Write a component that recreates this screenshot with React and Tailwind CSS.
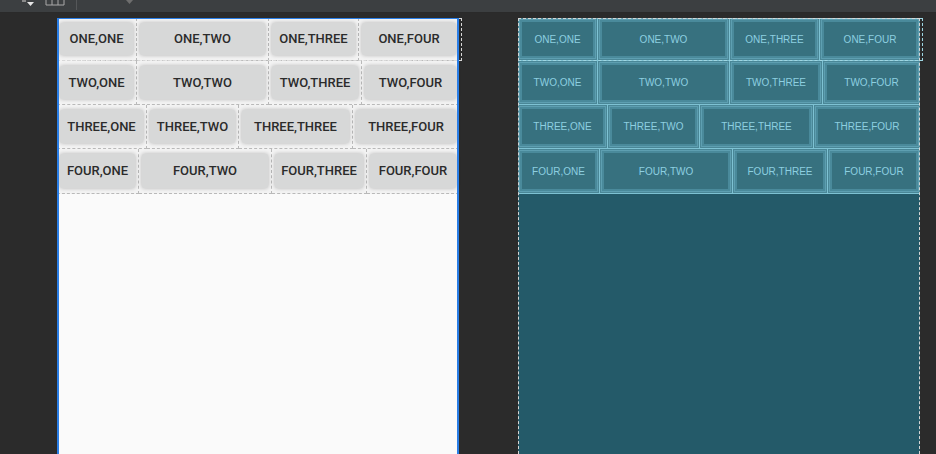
import React from 'react';

const rows = [
  { h: 'h-[43px]', cells: [['ONE,ONE', 'w-[80px]'], ['ONE,TWO', 'w-[132px]'], ['ONE,THREE', 'w-[90px]'], ['ONE,FOUR', 'w-[100px]']] },
  { h: 'h-[44px]', cells: [['TWO,ONE', 'w-[80px]'], ['TWO,TWO', 'w-[132px]'], ['TWO,THREE', 'w-[93px]'], ['TWO,FOUR', 'w-[97px]']] },
  { h: 'h-[44px]', cells: [['THREE,ONE', 'w-[90px]'], ['THREE,TWO', 'w-[92px]'], ['THREE,THREE', 'w-[114px]'], ['THREE,FOUR', 'w-[106px]']] },
  { h: 'h-[45px]', cells: [['FOUR,ONE', 'w-[82px]'], ['FOUR,TWO', 'w-[133px]'], ['FOUR,THREE', 'w-[95px]'], ['FOUR,FOUR', 'w-[92px]']] },
];

// small toolbar strip at the top of the layout editor
const Toolbar = () => (
  <div className="relative h-[13px] shrink-0 bg-[#3c3f41] border-b border-[#2a2a2a]">
    <div className="absolute left-[22px] top-0 h-[2px] w-[4px] bg-[#8a8a8a]" />
    <svg className="absolute left-[27px] top-[2px]" width="7" height="4" viewBox="0 0 7 4">
      <path d="M0 0h7L3.5 4z" fill="#e6e6e6" />
    </svg>
    <svg className="absolute left-[45px] top-0" width="20" height="6" viewBox="0 0 20 6">
      <path d="M1 0v5h18V0M7 0v5M13 0v5" fill="none" stroke="#a9a9a9" strokeWidth="1" />
    </svg>
    <div className="absolute left-[76px] top-0 h-[10px] w-px bg-[#555759]" />
    <svg className="absolute left-[126px] top-0" width="7" height="4" viewBox="0 0 7 4">
      <path d="M0 0h7L3.5 4z" fill="#6e6e6e" />
    </svg>
  </div>
);

const DesignCell = ({ label, w, last }) => (
  <div
    className={`${w} shrink-0 h-full px-[3px] py-[5px] bg-[#f3f3f3] border-b border-dashed border-[#b9b9b9] ${
      last ? '' : 'border-r'
    }`}
  >
    <div className="h-full flex items-center justify-center rounded-[2px] bg-[#d7d8d8] shadow-[0_0_4px_rgba(0,0,0,0.28)] text-[13px] font-medium text-[#2b2b2b] font-['Roboto',sans-serif] whitespace-nowrap">
      {label}
    </div>
  </div>
);

const BlueprintCell = ({ label, w, last }) => (
  <div
    className={`${w} shrink-0 h-full p-[2px] bg-[#4a8797] border-b border-[#7ec2d3] ${last ? '' : 'border-r'}`}
  >
    <div className="h-full flex items-center justify-center border-[2px] border-[#4a8a9b] outline outline-1 outline-[#5e9fb1] bg-[#37717f] text-[10px] text-[#8dcfe0] font-['Liberation_Sans',Arial,sans-serif] whitespace-nowrap">
      {label}
    </div>
  </div>
);

const DesignScreen = () => (
  <div className="relative w-[402px] h-full bg-[#fafafa] flex flex-col">
    {rows.map((row, i) => (
      <div key={i} className={`${row.h} flex shrink-0`}>
        {row.cells.map(([label, w], j) => (
          <DesignCell key={label} label={label} w={w} last={j === 3} />
        ))}
      </div>
    ))}
    <div className="absolute left-0 top-0 h-[43px] -right-[3px] border border-dashed border-[#d8d8d8] pointer-events-none" />
    <div className="absolute inset-0 border-x-2 border-[#2a7ee6] border-t border-t-[#2a7ee6] pointer-events-none" />
  </div>
);

const BlueprintScreen = () => (
  <div className="relative w-[402px] h-full bg-[#245a69] flex flex-col">
    {rows.map((row, i) => (
      <div key={i} className={`${row.h} flex shrink-0`}>
        {row.cells.map(([label, w], j) => (
          <BlueprintCell key={label} label={label} w={w} last={j === 3} />
        ))}
      </div>
    ))}
    <div className="absolute left-0 top-0 h-[43px] -right-[3px] border border-dashed border-[#9fd6e2] pointer-events-none" />
    <div className="absolute inset-0 border border-dashed border-[#d6d6d6] border-b-0 pointer-events-none" />
  </div>
);

export default function App() {
  return (
    <div className="w-[936px] h-[454px] overflow-hidden bg-[#2b2b2b] flex flex-col">
      <Toolbar />
      <div className="flex-1 min-h-0 flex pl-[57px] pt-[5px] gap-[59px]">
        <DesignScreen />
        <BlueprintScreen />
      </div>
    </div>
  );
}
